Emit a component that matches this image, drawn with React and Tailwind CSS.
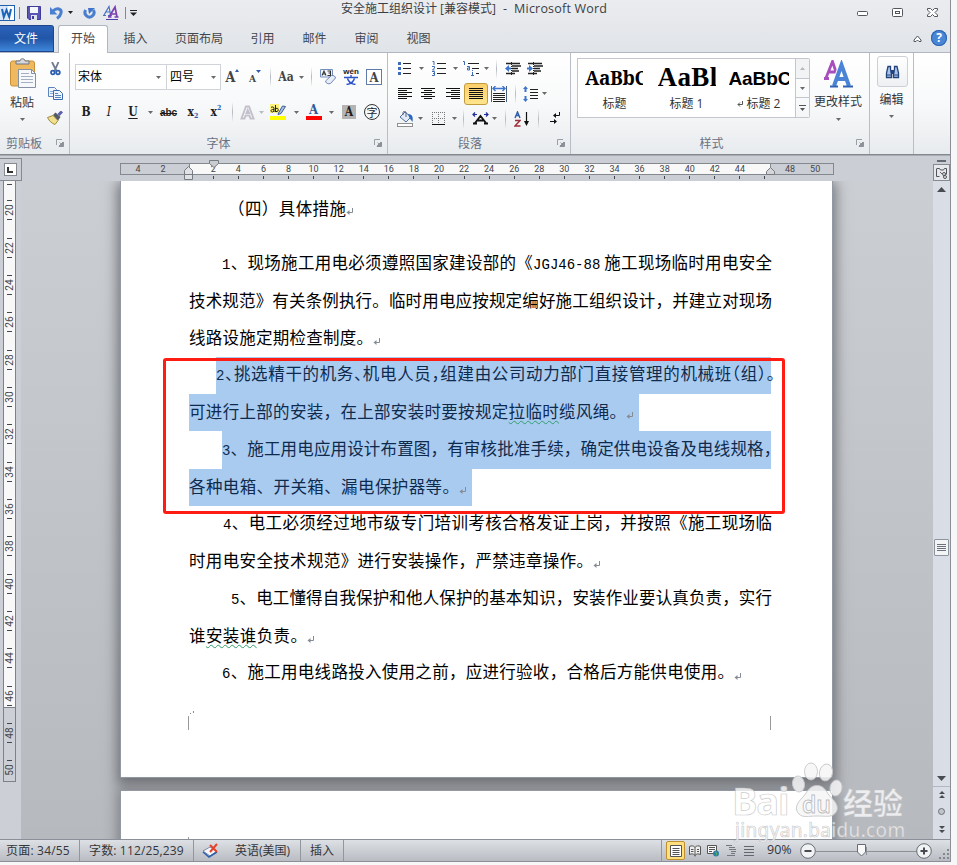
import { clsx } from 'clsx'

const tabs = [
  { label: '插入', cls: 'w-[27px] ml-[14px]' },
  { label: '页面布局', cls: 'w-[52px] ml-[24px]' },
  { label: '引用', cls: 'w-[27px] ml-[24px]' },
  { label: '邮件', cls: 'w-[27px] ml-[25px]' },
  { label: '审阅', cls: 'w-[27px] ml-[25px]' },
  { label: '视图', cls: 'w-[27px] ml-[25px]' },
]

// -4..50 on the horizontal ruler, 0 and 46 are hidden under the markers
const hTicks = Array.from({ length: 28 }, (_, i) => i * 2 - 4)
const vTicks = Array.from({ length: 16 }, (_, i) => 20 + i * 2)

const lines = [
  { text: '1、现场施工用电必须遵照国家建设部的《', latin: 'JGJ46-88', rest: '施工现场临时用电安全', pos: 'ml-[101px]', width: 'w-[550px]' },
  { text: '技术规范》有关条例执行。临时用电应按规定编好施工组织设计，并建立对现场', pos: 'ml-[68px]', width: 'w-[583px]' },
  { text: '线路设施定期检查制度。', pos: 'ml-[68px]', width: 'w-[184px]', end: true },
  { text: '2、挑选精干的机务、机电人员，组建由公司动力部门直接管理的机械班（组）。', pos: 'ml-[95px]', width: 'w-[559px]', selected: 'w-[555px]', tight: true },
  { text: '可进行上部的安装，在上部安装时要按规定', wavy: '拉临时', rest: '缆风绳。', pos: 'ml-[68px]', width: 'w-[437px]', selected: 'w-[450px]', end: true },
  { text: '3、施工用电应用设计布置图，有审核批准手续，确定供电设备及电线规格', rest: '，', pos: 'ml-[101px]', width: 'w-[550px]', selected: 'w-[549px]', tightEnd: true },
  { text: '各种电箱、开关箱、漏电保护器等。', pos: 'ml-[68px]', width: 'w-[270px]', selected: 'w-[283px]', end: true },
  { text: '4、电工必须经过地市级专门培训考核合格发证上岗，并按照《施工现场临', pos: 'ml-[102px]', width: 'w-[549px]' },
  { text: '时用电安全技术规范》进行安装操作，严禁违章操作。', pos: 'ml-[68px]', width: 'w-[404px]', end: true },
  { text: '5、电工懂得自我保护和他人保护的基本知识，安装作业要认真负责，实行', pos: 'ml-[110px]', width: 'w-[541px]' },
  { text: '谁', wavy: '安装谁', rest: '负责。', pos: 'ml-[68px]', width: 'w-[118px]', end: true },
  { text: '6、施工用电线路投入使用之前，应进行验收，合格后方能供电使用。', pos: 'ml-[101px]', width: 'w-[512px]', end: true },
]

function Icon({ w = 16, h = 16, className, children }) {
  return (
    <svg width={w} height={h} viewBox={`0 0 ${w} ${h}`} fill="none" className={clsx('shrink-0', className)}>
      {children}
    </svg>
  )
}

function Cell({ className, children }) {
  return <div className={clsx('flex shrink-0 items-center justify-center', className)}>{children}</div>
}

function Arrow({ light }) {
  return <Icon w={5} h={3}><path d="M0 0h5L2.5 3z" fill={light ? '#b9bcc2' : '#6a6a6a'} /></Icon>
}

function Sep() {
  return <div className="h-5 w-px bg-gradient-to-b from-transparent via-[#b4b9c0] to-transparent" />
}

function Launcher() {
  return (
    <Icon w={8} h={8}>
      <path d="M.5 6V.5H6M3.5 3.5l3 3" stroke="#9a9fa6" />
      <path d="M7.500 3v4.500H3zM7 3v4H3z" fill="#8d9299" stroke="#8d9299" />
    </Icon>
  )
}

function GroupLabel({ children, right = 'right-[5px]' }) {
  return (
    <div className="relative flex h-5 items-center justify-center text-[12px] text-[#6a7182]">
      {children}
      <div className={clsx('absolute top-[5px]', right)}><Launcher /></div>
    </div>
  )
}

function ParaMark({ className }) {
  return (
    <Icon w={7} h={7} className={className}>
      <path d="M6.500 0v4.500H1" stroke="#858b93" />
      <path d="M3.500 2v5L.5 4.500z" fill="#858b93" />
    </Icon>
  )
}

/* ---------- title bar ---------- */

function TitleBar() {
  return (
    <div className="relative flex h-[25px] items-center">
      <Icon w={16} h={16} className="-ml-px">
        <rect x=".5" y=".5" width="15" height="15" fill="#d8e8fa" stroke="#1f5fae" />
        <path d="M9 1h6v14H9z" fill="#fff" />
        <path d="M3 4l1.800 8 2.700-7 2.700 7L12 4" stroke="#1c62b7" strokeWidth="2" />
      </Icon>
      <div className="ml-1 h-3 w-px bg-[#85888e]" />
      <Icon w={14} h={14} className="ml-[7px]">
        <path d="M.5 .5h13v13H2L.5 12z" fill="#5a55b5" stroke="#413c98" />
        <path d="M3 1h8v6H3z" fill="#f4f7fc" />
        <path d="M4 9h6v5H4z" fill="#dde2f0" />
        <path d="M5 10h2v3H5z" fill="#413c98" />
      </Icon>
      <Icon w={13} h={14} className="ml-[9px]">
        <path d="M3 5c4-4 9-2 8 2-.4 2.500-2 4-4 5.500" stroke="#4a7fd0" strokeWidth="3" />
        <path d="M0 1v7.500h7.500z" fill="#4a80d3" />
      </Icon>
      <Icon w={5} h={3} className="ml-[5px]"><path d="M0 0h5L2.500 3z" fill="#222" /></Icon>
      <Icon w={13} h={14} className="ml-[10px]">
        <path d="M2.700 4a4.500 4.500 0 1 0 7.600 0" stroke="#4a7fd0" strokeWidth="3" />
        <path d="M5 2h7L6 8z" fill="#3f74c9" />
      </Icon>
      <Icon w={17} h={15} className="ml-[7px]">
        <path d="M1 10L6 1.500l1.500 8M3.500 7h3.500M0 10.500h3M5 10.500h4" stroke="#4472c4" strokeWidth="1.200" />
        <path d="M6 12l6-10 2 10M8.500 9h5M5 12h3.500M11.500 12h4" stroke="#7b3fb0" strokeWidth="1.700" />
        <path d="M3 14.500h12" stroke="#4a3fa8" />
      </Icon>
      <div className="ml-[5px] h-3 w-px bg-[#85888e]" />
      <Icon w={7} h={6} className="ml-[4px] mt-px"><path d="M0 .5h7" stroke="#222" /><path d="M0 2.500h7L3.500 6z" fill="#222" /></Icon>

      <div className="absolute left-[341px] top-0 h-[18px] w-[270px] whitespace-nowrap text-[12px] leading-[18px] text-[#3b3e44]">
        安全施工组织设计 [兼容模式]<span className="ml-[7px] text-[12.5px] tracking-[0.2px]">- &nbsp;Microsoft Word</span>
      </div>

      <div className="ml-auto mr-[12px] flex items-center gap-[24px]">
        <Icon w={11} h={5} className="mt-[2px]"><rect x=".5" y=".5" width="10" height="4" rx="1" fill="#fff" stroke="#51565f" /></Icon>
        <Icon w={11} h={9} className="-mt-[1px]"><rect x=".5" y=".5" width="10" height="8" rx="1" fill="#fff" stroke="#51565f" /><rect x="3.500" y="3.500" width="4" height="2" stroke="#51565f" /></Icon>
        <Icon w={11} h={9} className="-mt-[1px]">
          <path d="M.5.5h3l2 2 2-2h3v1.500L8 4.500l2.500 2.500v1.500h-3l-2-2-2 2h-3V7L3 4.500.5 2z" fill="#fff" stroke="#51565f" />
        </Icon>
      </div>
    </div>
  )
}

function TabBar() {
  return (
    <div className="flex h-[28px] items-end border-b border-[#b1b7c0] text-[#42464d]">
      <div className="flex h-[27px] w-[54px] items-center justify-center rounded-tr-[3px] border border-l-0 border-[#1d468f] bg-gradient-to-b from-[#2b62b8] via-[#2156a8] to-[#3f86da] text-white">
        <span className="-ml-px text-[12px]">文件</span>
      </div>
      <div className="-mb-px ml-1 flex h-[28px] w-[50px] items-center justify-center rounded-t-[3px] border border-b-0 border-[#b1b7c0] bg-white pb-px text-[12px]">开始</div>
      {tabs.map((t) => (
        <div key={t.label} className={clsx('flex h-[26px] items-center justify-center whitespace-nowrap text-[12px]', t.cls)}>{t.label}</div>
      ))}
      <div className="mb-[6px] ml-auto mr-[3px] flex items-center gap-[9px]">
        <Icon w={9} h={7}><path d="M1 5l3.500-4L8 5v1.500H6L4.500 5 3 6.500H1z" fill="#fff" stroke="#50545c" /></Icon>
        <div className="flex size-4 items-center justify-center rounded-full bg-[#4a86d6] text-[12px] font-bold text-white ring-1 ring-inset ring-[#2d63b0]">?</div>
      </div>
    </div>
  )
}

/* ---------- ribbon ---------- */

function ClipboardGroup() {
  return (
    <div className="flex w-[70px] shrink-0 flex-col border-r border-[#b9bec6]">
      <div className="flex h-[81px]">
        <div className="flex w-[44px] flex-col items-center pt-[5px]">
          <Icon w={27} h={31} className="ml-[2px]">
            <rect x=".5" y="3" width="24" height="25" rx="2" fill="#efb960" stroke="#c89037" />
            <path d="M6 6V3h4c0-3 5-3 5 0h4v3z" fill="#d5d8dc" stroke="#70757c" />
            <path d="M8.500 11.500h13l4 4v14h-17z" fill="#f6f8fb" stroke="#8491a5" />
            <path d="M21.500 11.500v4h4" stroke="#8491a5" />
            <path d="M11 15.500h8M11 18.500h12M11 21.500h12M11 24.500h12" stroke="#a4b0c2" />
          </Icon>
          <div className="mt-[6px] text-[12px] leading-4 text-[#33363c]">粘贴</div>
          <div className="mt-[7px]"><Arrow /></div>
        </div>
        <div className="flex w-[22px] flex-col items-center gap-[11px] pt-[9px]">
          <Icon w={11} h={14}>
            <path d="M2 0l4.500 9M8.500 0L4.500 9" stroke="#6f7b8e" strokeWidth="1.800" />
            <circle cx="2.800" cy="10.500" r="1.800" stroke="#2d5fb0" strokeWidth="1.800" />
            <circle cx="8" cy="10.500" r="1.800" stroke="#2d5fb0" strokeWidth="1.800" />
          </Icon>
          <Icon w={15} h={13}>
            <path d="M.5.5h6l2 2v7h-8z" fill="#eef4fc" stroke="#5d83bd" />
            <path d="M2 4.500h4M2 6.500h4" stroke="#8aa9d6" />
            <path d="M5.500 3.500h6l3 3v6h-9z" fill="#eef4fc" stroke="#3e68ad" />
            <path d="M7 6.500h3M7 8.500h6M7 10.500h6" stroke="#5d83bd" />
          </Icon>
          <Icon w={16} h={14}>
            <path d="M.5 6.500L6 4.500l5 5L8 13.500C5 12.500 2 10 .5 6.500z" fill="#f0e190" stroke="#a28b3b" />
            <path d="M6 4l2.500-2.500 5 4.500L11 9.500z" fill="#555a63" />
            <path d="M11.500 4L15 .5" stroke="#5b5fae" strokeWidth="3" />
          </Icon>
        </div>
      </div>
      <GroupLabel><span className="mr-[21px]">剪贴板</span></GroupLabel>
    </div>
  )
}

function FontGroup() {
  return (
    <div className="flex w-[318px] shrink-0 flex-col border-r border-[#b9bec6]">
      <div className="h-[81px] pl-[5px]">
        <div className="flex h-[48px] items-center font-['DejaVu_Serif_Condensed','DejaVu_Serif',serif] font-bold text-[#444]">
          <div className="flex h-[26px] w-[92px] items-center justify-between border border-[#d0d3d8] bg-white pl-[2px] pr-[5px] font-['Open_Sans','Noto_Sans_CJK_SC',sans-serif] text-[12px] font-normal text-black">宋体<Arrow /></div>
          <div className="-ml-px flex h-[26px] w-[55px] items-center justify-between border border-[#d0d3d8] bg-white pl-[3px] pr-[4px] font-['Open_Sans','Noto_Sans_CJK_SC',sans-serif] text-[12px] font-normal text-black">四号<Arrow /></div>
          <Cell className="w-[23px] text-[14px]">A<Icon w={4} h={3} className="-mt-[13px]"><path d="M0 3h4L2 0z" fill="#2e5ca8" /></Icon></Cell>
          <Cell className="w-[22px] pt-[2px] text-[10px]">A<Icon w={5} h={3} className="-mt-[13px]"><path d="M0 0h5L2.500 3z" fill="#2e5ca8" /></Icon></Cell>
          <Cell className="w-2"><Sep /></Cell>
          <Cell className="w-[24px] text-[12px]">Aa</Cell>
          <Cell className="w-[7px]"><Arrow /></Cell>
          <Cell className="w-[13px]"><Sep /></Cell>
          <Cell className="w-5">
            <Icon w={16} h={16}>
              <path d="M.5.500h12v7.500H.5z" fill="#f3f6fb" stroke="#7390c0" />
              <path d="M2 6.500l2-4.500 2 4.500M3 5h2M7.500 2h3v4.500h-3M8.500 4h2" stroke="#333" strokeWidth="1.100" />
              <path d="M5.500 12l6-5.500c2-.5 4 1 4 2.500l-5 5.500c-2 1-5-.5-5-2.500z" fill="#e8eef8" stroke="#6c86b5" />
            </Icon>
          </Cell>
          <Cell className="w-[26px]">
            <div className="flex flex-col items-center font-['Liberation_Sans',sans-serif]">
              <span className="text-[8px] leading-[6px] text-[#222]">wén</span>
              <Icon w={14} h={10}><path d="M7 0v2M0 2.500h14M3.500 3.500c1 3 4 5.500 8 6M10.500 3.500c-1 3-4 5.500-8 6" stroke="#2b53c8" strokeWidth="1.400" /></Icon>
            </div>
          </Cell>
          <Cell className="w-5">
            <div className="flex size-4 items-center justify-center border border-[#5f7ba8] bg-white text-[13px] leading-none">A</div>
          </Cell>
        </div>
        <div className="flex h-[22px] items-center font-['DejaVu_Serif_Condensed','DejaVu_Serif',serif] text-[12px] font-bold text-[#1d1d1d]">
          <Cell className="w-[22px]">B</Cell>
          <Cell className="w-6 font-normal italic">I</Cell>
          <Cell className="w-6 underline underline-offset-2">U</Cell>
          <Cell className="w-[10px]"><Arrow /></Cell>
          <Cell className="w-[27px] font-['Liberation_Sans',sans-serif] text-[10px] line-through">abc</Cell>
          <Cell className="w-[22px]">x<span className="mt-[8px] text-[7px] text-[#2e5ca8]">2</span></Cell>
          <Cell className="w-6">x<span className="-mt-[8px] text-[7px] text-[#2e5ca8]">2</span></Cell>
          <Cell className="w-2"><Sep /></Cell>
          <Cell className="w-[22px]">
            <Icon w={15} h={15}>
              <path d="M1.500 13.500L6 1.500h3l4.500 12h-3l-1-3h-4l-1 3zM6.500 8h2.500L7.700 5z" fill="#fff" stroke="#c3c2cc" strokeWidth="2" />
            </Icon>
          </Cell>
          <Cell className="w-[6px]"><Arrow light /></Cell>
          <Cell className="w-7">
            <Icon w={16} h={16}>
              <path d="M0 0h9v9H0z" fill="#fdf279" />
              <path d="M1 3.500c1-1 3-.5 3 .5v4M4 5.500H2.500c-2 0-2 2.500 0 2.500L4 7M5.500 1v7M6 4.500c3-1.500 3 4 0 3" stroke="#222" />
              <path d="M8.500 9l4-7 3 .5L11 9.500l-3 1z" fill="#a9c1e3" stroke="#3c5c93" />
              <path d="M0 12h16v4H0z" fill="#ff0" />
            </Icon>
          </Cell>
          <Cell className="w-2"><Arrow /></Cell>
          <Cell className="w-[27px] flex-col">
            <div className="h-[12px] text-[13px] leading-[11px] text-[#33589b]">A</div>
            <div className="h-[4px] w-4 bg-[#f00]" />
          </Cell>
          <Cell className="w-2"><Arrow /></Cell>
          <Cell className="w-7"><div className="flex size-[14px] items-center justify-center bg-[#b4b4b4] text-[12px] leading-none">A</div></Cell>
          <Cell className="w-[18px]">
            <div className="flex size-4 items-center justify-center rounded-full border border-[#333] font-['Noto_Sans_CJK_SC',sans-serif] text-[11px] font-normal leading-none">字</div>
          </Cell>
        </div>
      </div>
      <GroupLabel><span className="mr-[20px]">字体</span></GroupLabel>
    </div>
  )
}

function AlignIcon({ d }) {
  return <Icon w={14} h={11}><path d={d} stroke="#111" /></Icon>
}

function ParagraphGroup() {
  return (
    <div className="flex w-[183px] shrink-0 flex-col border-r border-[#b9bec6]">
      <div className="h-[81px] pl-[7px] pt-[3px]">
        <div className="flex h-[25px] items-center">
          <Cell className="w-[19px]">
            <Icon w={14} h={14}>
              <path d="M5 1.500h8M5 6.500h8M5 11.500h8" stroke="#222" />
              <path d="M0 0h3v3H0zM0 5h3v3H0zM0 10h3v3H0z" fill="#3e6bb5" />
            </Icon>
          </Cell>
          <Cell className="w-[14px]"><Arrow /></Cell>
          <Cell className="w-[22px]">
            <Icon w={15} h={15}>
              <path d="M5 2.500h9M5 7.500h9M5 12.500h9" stroke="#222" />
              <path d="M.5.500H2V4M0 5.500h2.500v1.500L.5 9h2M0 10.500h2.500v4H0M1 12.500h1.500" stroke="#3e6bb5" />
            </Icon>
          </Cell>
          <Cell className="w-[10px]"><Arrow /></Cell>
          <Cell className="w-[23px]">
            <Icon w={17} h={15}>
              <path d="M5 2.500h11M9 7.500h7M13 12.500h3" stroke="#222" />
              <path d="M0 .5h1.500V4M4 5.500h2.500v3.500H4.500v-2h2M9.500 11v4M9.500 9v1M8 14.500h3" stroke="#3e6bb5" />
            </Icon>
          </Cell>
          <Cell className="w-[7px]"><Arrow /></Cell>
          <Cell className="w-[13px]"><Sep /></Cell>
          <Cell className="w-5">
            <Icon w={16} h={14}>
              <path d="M1 1.500h14M7 4h9M7 6.500h6M7 9h7M1 11.500h9" stroke="#222" strokeWidth="1.300" />
              <path d="M6.500 0v14" stroke="#222" strokeDasharray="1 1" />
              <path d="M6 5.500v2H4V10L0 6.500 4 3v2.500z" fill="#3e75cc" />
            </Icon>
          </Cell>
          <Cell className="w-6">
            <Icon w={16} h={14}>
              <path d="M1 1.500h14M7 4h9M7 6.500h6M7 9h7M1 11.500h9" stroke="#222" strokeWidth="1.300" />
              <path d="M6.500 0v14" stroke="#222" strokeDasharray="1 1" />
              <path d="M0 5.500v2h2V10l4-3.500L2 3v2.500z" fill="#3e75cc" />
            </Icon>
          </Cell>
        </div>
        <div className="flex h-[25px] items-center">
          <Cell className="w-5"><AlignIcon d="M0 .5h14M0 2.500h9M0 4.500h14M0 6.500h9M0 8.500h14M0 10.500h9" /></Cell>
          <Cell className="w-[26px]"><AlignIcon d="M0 .5h14M3 2.500h8M0 4.500h14M3 6.500h8M0 8.500h14M3 10.500h8" /></Cell>
          <Cell className="w-[23px]"><AlignIcon d="M0 .5h14M5 2.500h9M0 4.500h14M5 6.500h9M0 8.500h14M5 10.500h9" /></Cell>
          <div className="flex h-[22px] w-6 items-center justify-center rounded-[3px] border border-[#c29b3d] bg-gradient-to-b from-[#fbcf6a] to-[#ffe48c]">
            <AlignIcon d="M0 .5h14M0 2.500h14M0 4.500h14M0 6.500h14M0 8.500h14M0 10.500h14" />
          </div>
          <Cell className="w-[22px]">
            <Icon w={16} h={16}>
              <path d="M.5 0v16M15.500 0v16" stroke="#4a5f86" />
              <path d="M2 7.500h12M2 9.500h12M2 11.500h12M2 13.500h12M2 15.500h12" stroke="#222" />
              <path d="M2 2.500h12M4.500 0L2 2.500 4.500 5M11.500 0L14 2.500 11.500 5" stroke="#3e75cc" strokeWidth="1.400" />
            </Icon>
          </Cell>
          <Cell className="w-[11px]"><Sep /></Cell>
          <Cell className="w-5">
            <Icon w={16} h={16}>
              <path d="M7 3.500h8M7 6.500h8M7 9.500h8M7 12.500h8" stroke="#222" />
              <path d="M2.500 0L5 3H3.500v3h-2V3H0zM2.500 16L5 13H3.500v-3h-2v3H0z" fill="#3e75cc" />
            </Icon>
          </Cell>
          <Cell className="w-[7px]"><Arrow /></Cell>
        </div>
        <div className="flex h-[25px] items-center">
          <Cell className="w-5">
            <Icon w={17} h={16}>
              <path d="M3 6l5-5 6 5-5 5z" fill="#e3ebf7" stroke="#516f9f" />
              <path d="M6 4V1.500c0-1.500 3-1.500 3 0V6" stroke="#56647a" />
              <path d="M11 3c5 0 5 4 4.500 8L12.500 7z" fill="#2a66bd" />
              <rect x=".5" y="12.500" width="15" height="3" fill="#fff" stroke="#909090" />
            </Icon>
          </Cell>
          <Cell className="w-[11px]"><Arrow /></Cell>
          <Cell className="w-6">
            <Icon w={13} h={13}>
              <path d="M.5 0v12M6.500 0v12M12.500 0v12M0 .5h13M0 6.500h13" stroke="#777" strokeDasharray="1 1" />
              <path d="M0 12.500h13" stroke="#111" />
            </Icon>
          </Cell>
          <Cell className="w-2"><Arrow /></Cell>
          <Cell className="w-[11px]"><Sep /></Cell>
          <Cell className="w-[22px]">
            <Icon w={17} h={13}>
              <path d="M1 11.500h4M12 11.500h4M3 11l5.500-7L14 11M5.500 8.500h6" stroke="#111" strokeWidth="1.800" />
              <path d="M1 2.500h4M3 .5l-2 2 2 2M12 2.500h4M14 .5l2 2-2 2" stroke="#1c2f9c" strokeWidth="1.200" />
            </Icon>
          </Cell>
          <Cell className="w-[6px]"><Arrow /></Cell>
          <Cell className="w-4"><Sep /></Cell>
          <Cell className="w-[18px]">
            <Icon w={7} h={16}>
              <path d="M1 7l2.500-6L6 7M2 4.500h3" stroke="#2e5ca8" strokeWidth="1.400" />
              <path d="M1 9.500h5L1 15h5.500" stroke="#9c2f3a" strokeWidth="1.400" />
            </Icon>
            <Icon w={7} h={14} className="ml-[2px]"><path d="M3.500 0v12" stroke="#111" strokeWidth="1.200" /><path d="M1 9h5l-2.500 5z" fill="#111" /></Icon>
          </Cell>
          <Cell className="w-[15px]"><Sep /></Cell>
          <Cell className="w-[18px]">
            <Icon w={11} h={13}>
              <path d="M9.500 0v3.500H5M0 9.500h5" stroke="#111" />
              <path d="M6 1v5L3 3.500zM4 7v5l3-2.500z" fill="#111" />
            </Icon>
          </Cell>
        </div>
      </div>
      <GroupLabel><span className="mr-[18px]">段落</span></GroupLabel>
    </div>
  )
}

function StylesGroup() {
  return (
    <div className="flex w-[299px] shrink-0 flex-col border-r border-[#b9bec6]">
      <div className="flex h-[81px] pl-[6px] pt-[5px]">
        <div className="flex h-[60px] w-[219px] items-stretch border border-[#c3c7cd] bg-white text-[12px] text-[#333]">
          <div className="flex w-[73px] flex-col items-center">
            <div className="h-[36px] w-[59px] overflow-hidden whitespace-nowrap pt-[3px] font-['Noto_Serif','DejaVu_Serif_Condensed','DejaVu_Serif',serif] text-[19px] font-bold leading-[33px] tracking-[-0.3px] text-black">AaBb<span className="inline-block w-[8px] overflow-hidden align-top">C</span></div>
            <div className="leading-[18px]">标题</div>
          </div>
          <div className="flex w-[71px] flex-col items-center">
            <div className="h-[36px] w-[58px] overflow-hidden whitespace-nowrap font-['Liberation_Serif',serif] text-[27px] font-bold leading-[36px] tracking-[0.4px] text-black">AaBl</div>
            <div className="leading-[18px]">标题 1</div>
          </div>
          <div className="flex w-[73px] flex-col items-center">
            <div className="h-[36px] w-[60px] overflow-hidden whitespace-nowrap pt-[3px] font-['Liberation_Sans',sans-serif] text-[19px] font-bold leading-[33px] tracking-[-0.1px] text-black">AaBb<span className="inline-block w-[11px] overflow-hidden align-top">C</span></div>
            <div className="flex items-center gap-1 leading-[18px]"><Icon w={6} h={6}><path d="M5.500 0v3.500H1M3 1.500l-2 2 2 2" stroke="#555" /></Icon>标题 2</div>
          </div>
        </div>
        <div className="flex h-[60px] w-[14px] flex-col divide-y divide-[#c3c7cd] rounded-r-[2px] border border-l-0 border-[#c3c7cd]">
          <Cell className="flex-1 bg-[#f2f3f5]"><Icon w={5} h={3}><path d="M0 3h5L2.500 0z" fill="#b5b8bd" /></Icon></Cell>
          <Cell className="flex-1"><Arrow /></Cell>
          <Cell className="flex-1"><Icon w={7} h={6}><path d="M0 .5h7" stroke="#555" /><path d="M1 3h5L3.500 6z" fill="#555" /></Icon></Cell>
        </div>
        <div className="ml-[3px] flex w-[50px] flex-col items-center">
          <Icon w={29} h={28} className="mt-[2px]">
            <path d="M2 18L8.500 1.500 14 18M4.500 12h8M0 18.500h5" stroke="#a84fbd" strokeWidth="2.800" />
            <path d="M10 26L17.500 5 25 26M13 19h9" stroke="#fff" strokeWidth="6" />
            <path d="M10 26L17.500 5 25 26M13 19h9" stroke="#4b84d6" strokeWidth="4" />
            <path d="M6 26.500h8M19 26.500h10" stroke="#2e62b4" strokeWidth="2" />
          </Icon>
          <div className="mt-[6px] whitespace-nowrap text-[12px] leading-4 text-[#33363c]">更改样式</div>
          <div className="mt-[8px]"><Arrow /></div>
        </div>
      </div>
      <GroupLabel><span className="mr-[17px]">样式</span></GroupLabel>
    </div>
  )
}

function EditGroup() {
  return (
    <div className="flex w-[44px] shrink-0 flex-col items-center border-r border-[#b9bec6] pt-[3px] text-[12px] text-[#33363c]">
      <div className="ml-[2px] flex size-[31px] items-center justify-center rounded-[3px] border border-[#cdd0d6] bg-gradient-to-b from-white to-[#eef0f3]">
        <Icon w={15} h={14}>
          <path d="M3 1.500h2.500v3l1 3v5h-5V8zM9.500 1.500H12L13.500 8v4.500h-5v-5l1-3z" fill="#a9c3ea" stroke="#23437c" strokeWidth="1.300" />
          <path d="M6 5.500h3v3H6zM1 10h5M9 10h5" fill="#23437c" stroke="#23437c" />
        </Icon>
      </div>
      <div className="mt-[5px] leading-4">编辑</div>
      <div className="mt-[7px] flex"><Arrow /></div>
    </div>
  )
}

/* ---------- rulers ---------- */

function HorizontalRuler() {
  return (
    <div className="flex h-[26px] shrink-0 border-t border-[#a9adb3] bg-[#cbced4]">
      <div className="mt-[2px] flex h-[23px] w-[22px] items-center justify-center self-start border border-l-0 border-[#84888f]">
        <div className="-ml-px flex size-[13px] items-end justify-center border border-[#868b93] bg-white pb-[2px]">
          <div className="size-[6px] border-b-2 border-l-2 border-[#333]" />
        </div>
      </div>
      <div className="relative ml-[98px] mt-[7px] w-[714px]">
        <div className="flex h-[12px] border border-[#84888f]">
          <div className="w-[68px]" />
          <div className="w-[582px] border-x border-[#84888f] bg-[#f8f8f8]" />
        </div>
        <div className="absolute left-[5.500px] top-0 flex w-[702px]">
          {hTicks.map((n) => (
            <div key={n} className="flex flex-1 flex-col items-center font-['Roboto',sans-serif] text-[9px] leading-[12px] text-[#43464c]">
              <div className="h-[13px]">{n === 0 || n === 46 ? '' : Math.abs(n)}</div>
              {n > 0 && n < 48 && <div className="h-[3px] w-px bg-[#43464c]" />}
            </div>
          ))}
        </div>
        <Icon w={11} h={8} className="absolute left-[89px] top-[-3px]"><path d="M.5.5h9v3L5 7.500.5 3.500z" fill="#c9ccd0" stroke="#777b82" /></Icon>
        <Icon w={10} h={15} className="absolute left-[64px] top-[3px]">
          <path d="M.5 8.500v-4L4.500.5l4 4v4zM.5 8.500h8v5h-8z" fill="#dfe1e4" stroke="#777b82" />
        </Icon>
        <Icon w={10} h={9} className="absolute left-[646px] top-[4px]"><path d="M.5 7.500v-3L4.500.5l4 4v3z" fill="#d3d5d9" stroke="#777b82" /></Icon>
      </div>
      <div className="ml-auto flex w-[17px] flex-col items-center pt-[4px]">
        <div className="h-[2px] w-[9px] bg-[#666b73]" />
        <div className="mt-[2px] flex h-[17px] w-[17px] items-center justify-center border border-[#868b93] bg-[#e6e8ec]">
          <Icon w={12} h={12}>
            <path d="M.5 2V9.500h3M.5 1.500h3l1 1.500h3l1-1.500h2v6" stroke="#51545a" />
            <path d="M4 5l2 2" stroke="#7b5560" />
            <circle cx="8" cy="7" r="1.500" stroke="#51545a" />
            <circle cx="9" cy="10" r="1.500" stroke="#51545a" />
          </Icon>
        </div>
      </div>
    </div>
  )
}

function VerticalRuler() {
  return (
    <div className="w-[21px] shrink-0 bg-[#ccd0d6] pl-[3px]">
      <div className="relative flex h-[601px] w-[13px] flex-col border border-t-0 border-[#7d828a]">
        <div className="h-[527px] border-b border-[#7d828a] bg-[#f8f8f8]" />
        <div className="absolute inset-x-0 top-[10.500px] flex flex-col">
          <div className="absolute left-[3px] top-[-8px] h-px w-[5px] bg-[#43464c]" />
          {vTicks.map((n) => (
            <div key={n} className="flex h-[37.35px] flex-col items-center justify-center gap-[1px]">
              <div className="h-px w-[5px] bg-[#43464c]" />
              <div className="flex h-[16px] w-[10px] items-center justify-center">
                <span className="-rotate-90 font-['Roboto',sans-serif] text-[10px] leading-none text-[#43464c]">{n}</span>
              </div>
              <div className={clsx('h-px w-[5px]', n < 50 && 'bg-[#43464c]')} />
            </div>
          ))}
        </div>
      </div>
    </div>
  )
}

/* ---------- document ---------- */

function Line({ line }) {
  const num = /^\d/.test(line.text)
  return (
    <div className={clsx('relative flex h-[37.25px] items-center', line.pos)}>
      {line.selected && <div className={clsx('absolute left-0 top-0 h-full bg-[#aacbf0]', line.selected)} />}
      <div
        className={clsx(
          'relative -top-px whitespace-nowrap [text-align-last:justify]',
          line.width,
          line.selected ? 'text-[#0e2a4d]' : 'text-black',
          line.tight && "[font-feature-settings:'halt']",
        )}
      >
        {num && <span className="font-['Liberation_Mono',monospace] text-[14px]">{line.text[0]}</span>}
        {num ? line.text.slice(1) : line.text}
        {line.latin && <span className="font-['Liberation_Mono',monospace] text-[14px]">{line.latin}</span>}
        {line.latin && ' '}
        {line.wavy && <span className="underline decoration-[#2f9e6c] decoration-wavy decoration-[0.7px] underline-offset-[2px]">{line.wavy}</span>}
        <span className={clsx(line.tightEnd && "[font-feature-settings:'halt']")}>{line.rest}</span>
      </div>
      {line.end && <ParaMark className="relative mt-[6px]" />}
    </div>
  )
}

function Document() {
  return (
    <div className="relative min-w-0 flex-1 overflow-hidden bg-gradient-to-b from-[#cbced3] to-[#b6b9be] pl-[99px]">
      <div className="h-[597px] w-[713px] border border-t-0 border-[#9299a3] bg-white font-['Noto_Sans_CJK_SC',sans-serif] text-[16.5px] shadow-[0_4px_12px_3px_rgba(60,62,66,0.6)]">
        <div className="flex h-[64px] items-start pl-[107px]">
          <div className="mt-[9px] flex h-[37px] w-[118px] items-center whitespace-nowrap">
            <span className="w-full [text-align-last:justify]">（四）具体措施</span>
          </div>
          <ParaMark className="mt-[27px]" />
        </div>
        {lines.map((line) => <Line key={line.text} line={line} />)}
        <div className="mt-[24px] flex justify-between pl-[67px] pr-[61px]">
          <div className="h-[14px] w-px bg-[#999]" />
          <div className="h-[14px] w-px bg-[#999]" />
        </div>
      </div>
      <div className="mt-[12px] h-[60px] w-[713px] border border-[#9299a3] bg-white shadow-[0_2px_12px_3px_rgba(60,62,66,0.45)]">
        <div className="ml-[67px] mt-[46px] h-3 w-px bg-[#999]" />
      </div>
      <div className="absolute left-[142px] top-[177px] h-[156px] w-[622px] rounded-[3px] border-3 border-[#ff1c12]" />
      <Icon w={5} h={4} className="absolute left-[169px] top-[530px]"><path d="M.5 2v1M3.500 0v2" stroke="#888" /></Icon>
    </div>
  )
}

function ScrollBar() {
  return (
    <div className="flex w-[17px] shrink-0 flex-col items-center bg-[#d9dde5]">
      <Icon w={9} h={5} className="mt-[6px]"><path d="M0 5h9L4.500 0z" fill="#474b52" /></Icon>
      <div className="mt-[347px] flex h-[17px] w-[15px] flex-col items-center justify-center gap-px rounded-[1px] border border-[#8e949e] bg-[#f3f4f6]">
        <div className="h-px w-[9px] bg-[#6c727c]" />
        <div className="h-px w-[9px] bg-[#6c727c]" />
        <div className="h-px w-[9px] bg-[#6c727c]" />
        <div className="h-px w-[9px] bg-[#6c727c]" />
      </div>
      <Icon w={9} h={5} className="mt-[220px]"><path d="M0 0h9L4.500 5z" fill="#474b52" /></Icon>
      <div className="mt-[5px] h-px w-full bg-[#b2b7c1]" />
      <Icon w={6} h={7} className="mt-[4px]"><path d="M0 3h6L3 0zM0 7h6L3 4z" fill="#474b52" /></Icon>
      <div className="mt-[10px] size-[7px] rounded-full border border-[#6b7078] bg-[#c0c4cb]" />
      <Icon w={6} h={7} className="mt-[11px]"><path d="M0 0h6L3 3zM0 4h6L3 7z" fill="#474b52" /></Icon>
    </div>
  )
}

function Watermark() {
  return (
    <div className="pointer-events-none absolute left-[732px] top-[760px] h-[84px] w-[176px] text-white/75 [-webkit-text-stroke:0.7px_rgba(190,190,192,0.8)]">
      <Icon w={54} h={58} className="absolute left-[58px] top-[2px]">
        <g fill="#f6f6f7" fillOpacity=".85" stroke="#c6c7c9" strokeWidth=".9">
          <ellipse cx="21" cy="9.500" rx="6.500" ry="8.500" />
          <ellipse cx="36" cy="10.500" rx="6.500" ry="8.500" transform="rotate(12 36 10.500)" />
          <ellipse cx="8.500" cy="22" rx="6" ry="8" transform="rotate(-10 8.500 22)" />
          <ellipse cx="46" cy="26" rx="6" ry="8" transform="rotate(10 46 26)" />
          <path d="M27 23.500c8 0 10 8 14 12 7 6 8 12 4 16-4 4-9 2.500-18 2.500s-14 2-18-2c-5-5-2-11 3-16 5-5 7-12.500 15-12.500z" />
        </g>
      </Icon>
      <div className="absolute left-0 top-[18px] font-['Open_Sans',sans-serif] text-[38px] font-bold leading-[44px] tracking-[-1.3px]">Bai</div>
      <div className="absolute left-[70px] top-[31px] font-['Open_Sans',sans-serif] text-[23px] font-semibold leading-[26px] text-white [-webkit-text-stroke:0.9px_#bdbec0]">du</div>
      <div className="absolute left-[111px] top-[23px] font-['Noto_Sans_CJK_SC',sans-serif] text-[30px] font-bold leading-[36px]">经验</div>
      <div className="absolute left-[3px] top-[58px] font-['Noto_Sans','Open_Sans',sans-serif] text-[19px] leading-[24px] tracking-[0.35px]">jingyan.baidu.com</div>
    </div>
  )
}

/* ---------- status bar ---------- */

function StatusBar() {
  return (
    <div className="flex h-[23px] shrink-0 items-stretch border-y border-[#8b8f98] bg-gradient-to-b from-[#dde0e4] to-[#b9bdc3] text-[12px] text-[#33363c] [&>div]:flex [&>div]:items-center">
      <div className="w-[80px] whitespace-nowrap border-r border-[#92969d] pl-[6px] tracking-[0.2px]">页面: 34/55</div>
      <div className="w-[114px] whitespace-nowrap border-r border-[#92969d] pl-[9px] tracking-[0.15px]">字数: 112/25,239</div>
      <div className="pl-[8px]">
        <Icon w={17} h={15}>
          <path d="M1 8l7-4 7 4-7 5z" fill="#f5f7fa" stroke="#7b8ba8" />
          <path d="M1 9l6 5 8-5" stroke="#2e5fae" strokeWidth="1.500" />
          <path d="M8 2l7 7M15 1L8 9" stroke="#e2452c" strokeWidth="2" />
        </Icon>
      </div>
      <div className="w-[82px] whitespace-nowrap border-r border-[#92969d] pl-[16px]">英语(美国)</div>
      <div className="w-[43px] border-r border-[#92969d] pl-[9px]">插入</div>
      <div className="ml-auto border-l border-[#92969d] pl-[4px]">
        <Cell className="h-[19px] w-[19px] rounded-[2px] border border-[#c0902f] bg-[#ffdf7e]">
          <Icon w={12} h={12}><path d="M.5.5h11v11H.5z" fill="#fff" stroke="#555" /><path d="M2.500 3.500h7M2.500 5.500h7M2.500 7.500h7M2.500 9.500h7" stroke="#555" /></Icon>
        </Cell>
        <Cell className="w-[19px]"><Icon w={12} h={12}><path d="M.5 1.500c2-1 4-1 5.500 1 1.500-2 3.500-2 5.500-1v8c-2-1-4-1-5.500 1-1.500-2-3.500-2-5.500-1zM6 2.500v9M2 4.500h2.500M2 6.500h2.500M8 4.500h2M8 6.500h2" fill="#eee" stroke="#555" /></Icon></Cell>
        <Cell className="w-[17px]"><Icon w={12} h={12}><path d="M.5.5h9v8h-9z" fill="#f6f6f6" stroke="#555" /><path d="M2 2.500h6M2 4.500h6M2 6.500h3" stroke="#555" /><circle cx="9" cy="8.500" r="3" fill="#2a7fa8" /><path d="M8 7l2 1-1 2.500" stroke="#5fb05a" /></Icon></Cell>
        <Cell className="w-[19px]"><Icon w={10} h={11}><path d="M0 .5h6M3 2.500h6M3 4.500h7M5 6.500h5M5 8.500h4M1 10.500h8" stroke="#73777e" /></Icon></Cell>
        <Cell className="w-[18px]"><Icon w={10} h={11}><path d="M0 1.500h10M0 4.500h10M0 7.500h10M0 10.500h10" stroke="#62666d" /></Icon></Cell>
      </div>
      <div className="ml-[9px] w-[33px] text-[12.5px]">90%</div>
      <div>
        <Icon w={132} h={18}>
          <path d="M16 9.500h101" stroke="#8d9299" />
          <path d="M66.500 5v8" stroke="#8d9299" />
          <circle cx="8" cy="9" r="7.300" fill="#f1f2f4" stroke="#666b73" />
          <path d="M4.500 9h7" stroke="#474a50" strokeWidth="2" />
          <path d="M57.500 2.500h8v7.500l-4 4-4-4z" fill="#f8f8f9" stroke="#666b73" />
          <circle cx="124" cy="9" r="7.300" fill="#f1f2f4" stroke="#666b73" />
          <path d="M120.500 9h7M124 5.500v7" stroke="#474a50" strokeWidth="2" />
        </Icon>
      </div>
      <div className="w-[18px] justify-end pr-px pt-[7px]">
        <Icon w={11} h={11}>
          <path d="M9 0h2v2H9zM9 4h2v2H9zM9 8h2v2H9zM5 4h2v2H5zM5 8h2v2H5zM1 8h2v2H1z" fill="#84888f" />
        </Icon>
      </div>
    </div>
  )
}

export default function App() {
  return (
    <div className="relative h-[865px] w-[957px] overflow-hidden bg-[#f7f7f8] font-['Open_Sans','Noto_Sans_CJK_SC',sans-serif]">
      <div className="flex h-[862px] w-[951px] flex-col border-r border-[#8b8f98]">
        <div className="bg-gradient-to-b from-[#ebecef] to-[#e0e4e8]">
          <TitleBar />
          <TabBar />
        </div>
        <div className="flex h-[102px] shrink-0 border-b border-[#84888f] bg-gradient-to-b from-white via-[#f8f9fa] to-[#e8ebee]">
          <ClipboardGroup />
          <FontGroup />
          <ParagraphGroup />
          <StylesGroup />
          <EditGroup />
        </div>
        <HorizontalRuler />
        <div className="flex h-[658px] shrink-0">
          <VerticalRuler />
          <Document />
          <ScrollBar />
        </div>
        <StatusBar />
      </div>
      <Watermark />
    </div>
  )
}
